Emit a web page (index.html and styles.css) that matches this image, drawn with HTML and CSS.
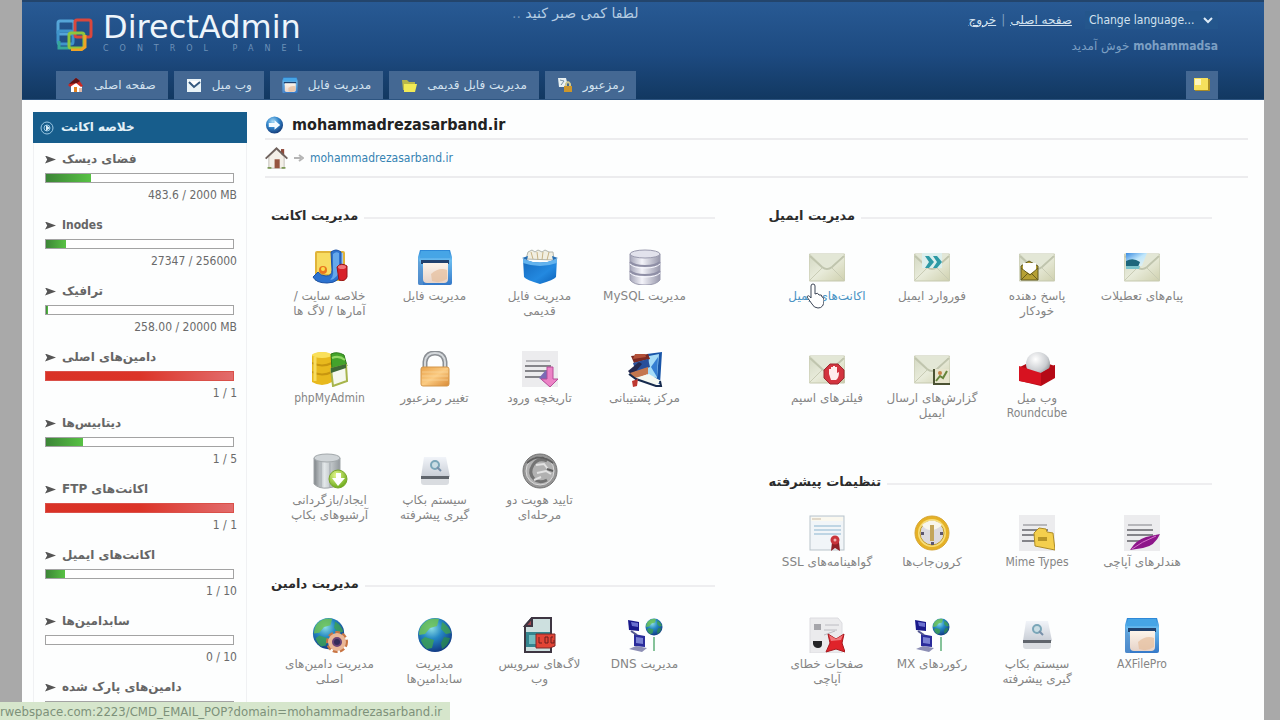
FILE: index.html
```html
<!DOCTYPE html>
<html lang="fa">
<head>
    <meta charset="UTF-8">
    <meta name="viewport" content="width=device-width, initial-scale=1.0">
    <title>DirectAdmin</title>
    <link rel="stylesheet" href="styles.css">
</head>
<body>
    <svg class="defs" aria-hidden="true">
        <defs>
            <linearGradient id="g-env" x1="0" y1="0" x2="1" y2="1"><stop offset="0" stop-color="#d3d8c3"/><stop offset=".5" stop-color="#e8ebda"/><stop offset="1" stop-color="#cfd0ae"/></linearGradient>
            <linearGradient id="g-blue" x1="0" y1="0" x2="0" y2="1"><stop offset="0" stop-color="#2b86d6"/><stop offset=".3" stop-color="#6bbdf0"/><stop offset="1" stop-color="#3478c8"/></linearGradient>
            <linearGradient id="g-box" x1="0" y1="0" x2="1" y2="1"><stop offset="0" stop-color="#1569bd"/><stop offset=".6" stop-color="#2389e0"/><stop offset="1" stop-color="#0c5fb6"/></linearGradient>
            <linearGradient id="g-cyl" x1="0" y1="0" x2="1" y2="0"><stop offset="0" stop-color="#a5a5b8"/><stop offset=".4" stop-color="#f4f4fa"/><stop offset="1" stop-color="#9797ab"/></linearGradient>
            <linearGradient id="g-steel" x1="0" y1="0" x2="1" y2="0"><stop offset="0" stop-color="#7f8488"/><stop offset=".4" stop-color="#e3e8ea"/><stop offset="1" stop-color="#92989c"/></linearGradient>
            <linearGradient id="g-lock" x1="0" y1="0" x2="1" y2="1"><stop offset="0" stop-color="#e9a24a"/><stop offset=".5" stop-color="#fbcb82"/><stop offset="1" stop-color="#d98a36"/></linearGradient>
            <linearGradient id="g-paper" x1="0" y1="0" x2="0" y2="1"><stop offset="0" stop-color="#fdf4ea"/><stop offset="1" stop-color="#e6d3c8"/></linearGradient>
            <linearGradient id="g-sky" x1="0" y1="0" x2="1" y2="1"><stop offset="0" stop-color="#3a8be0"/><stop offset=".5" stop-color="#bfe6fb"/><stop offset="1" stop-color="#e8f2ee"/></linearGradient>
            <radialGradient id="g-globe" cx=".4" cy=".3" r=".7"><stop offset="0" stop-color="#8bdde4"/><stop offset=".45" stop-color="#2588c4"/><stop offset="1" stop-color="#123c86"/></radialGradient>
            <radialGradient id="g-ball" cx=".4" cy=".3" r=".7"><stop offset="0" stop-color="#ffffff"/><stop offset=".7" stop-color="#c9ccd0"/><stop offset="1" stop-color="#8e9296"/></radialGradient>
            <radialGradient id="g-go" cx=".4" cy=".3" r=".7"><stop offset="0" stop-color="#a9dbf6"/><stop offset=".5" stop-color="#3387cc"/><stop offset="1" stop-color="#163e7c"/></radialGradient>
            <radialGradient id="g-lime" cx=".4" cy=".3" r=".7"><stop offset="0" stop-color="#e6f78e"/><stop offset="1" stop-color="#6dac1c"/></radialGradient>
            <linearGradient id="g-drive" x1="0" y1="0" x2="0" y2="1"><stop offset="0" stop-color="#f1f4f9"/><stop offset="1" stop-color="#c9ced6"/></linearGradient>
        </defs>

        <symbol id="i-stats" viewBox="0 0 36 36">
            <rect x="3" y="2" width="30" height="30" rx="2" fill="#e0b43a"/>
            <rect x="5" y="4" width="15" height="21" fill="#f7dc62"/>
            <rect x="21" y="4" width="10" height="20" fill="#9cc3ea"/>
            <circle cx="11" cy="21" r="4" fill="#e8761f"/><circle cx="11" cy="20" r="2" fill="#fbe04c"/>
            <path d="M19 3q5-4 10 0v18q0 13-14 13Q4 34 1 28l5-5q3 4 8 4 6 0 6-6z" fill="#2c72cf" stroke="#1c52a5"/>
            <path d="M21 5q3-3 6-1v16q0 9-9 11 4-4 3-9z" fill="#65a8ea"/>
            <path d="M25 18q4-5 10-1v11q-2 5-8 3z" fill="#d8202a" stroke="#98141c"/>
            <ellipse cx="30" cy="18" rx="4" ry="2" fill="#f0747a"/>
        </symbol>
        <symbol id="i-file" viewBox="0 0 36 36">
            <path d="M3 1h30l2 7v26q0 2-2 2H3q-2 0-2-2V8z" fill="url(#g-blue)"/>
            <path d="M4 2h28l1 7H3z" fill="#46a5e6"/>
            <rect x="4" y="11" width="28" height="4" fill="#20416e"/>
            <path d="M6 14h25v16q0 4-4 4H10q-4 0-4-4z" fill="url(#g-paper)"/>
            <path d="M14 25q8-7 16-4v9q-7 5-15 2z" fill="#e5bd9b" opacity=".7"/>
            <path d="M1 9v25q0 2 2 2h3V20z" fill="#5c93cc" opacity=".6"/>
        </symbol>
        <symbol id="i-box" viewBox="0 0 36 36">
            <path d="M4 10 6 3l4-2 3 2 3-2 4 2 3-2 4 2 4 0 1 8z" fill="#f1efe2" stroke="#b1b5ae"/>
            <path d="M9 3l2 7M15 3l1 8M21 3l-1 8M27 3l-2 8" stroke="#c6b284" fill="none"/>
            <path d="M1 10q17 7 34 0l-1 18q-2 3-16 7Q4 31 2 28z" fill="url(#g-box)"/>
            <path d="M1 10q17 7 34 0v4q-17 6-34 0z" fill="#63b3ee"/>
            <path d="M0 9l6-2-1 4zM36 9l-6-2 1 4z" fill="#236eb5"/>
        </symbol>
        <symbol id="i-db" viewBox="0 0 36 36">
            <path d="M3 5v26q4 5 15 5t15-5V5z" fill="url(#g-cyl)" stroke="#9a9aae"/>
            <ellipse cx="18" cy="5" rx="15" ry="4" fill="#e2e2ec" stroke="#9a9aae"/>
            <path d="M3 13q4 4 15 4t15-4M3 22q4 4 15 4t15-4" fill="none" stroke="#8f8fa6" stroke-width="2"/>
            <path d="M3 15q4 4 15 4t15-4M3 24q4 4 15 4t15-4" fill="none" stroke="#f8f8ff"/>
        </symbol>
        <symbol id="i-php" viewBox="0 0 36 36">
            <path d="M0 4q10-6 20 0v27q-10 6-20 0z" fill="#e8b91d"/>
            <ellipse cx="10" cy="4" rx="10" ry="3" fill="#fae05a"/>
            <path d="M0 12q10 5 20 0M0 21q10 5 20 0" stroke="#c8960f" stroke-width="2" fill="none"/>
            <path d="M3 6v24" stroke="#f7dc60" stroke-width="3"/>
            <path d="M19 3q6-3 13 1l3 11-15 4z" fill="#43a32b" stroke="#2b7a1a"/>
            <path d="M20 7q7-3 13 2" stroke="#93d866" stroke-width="2" fill="none"/>
            <path d="M19 18l15-4 1 16-14 5z" fill="#f5f8ee" stroke="#a7b54c" stroke-width="2"/>
            <path d="M19 17l15-4v4l-15 5z" fill="#3d6a36"/>
        </symbol>
        <symbol id="i-lock" viewBox="0 0 36 36">
            <path d="M8 18V11Q9 2 18 2t10 9v7" fill="none" stroke="#8b8f94" stroke-width="5"/>
            <path d="M8 18V11Q9 2 18 2t10 9v7" fill="none" stroke="#d5d9dc" stroke-width="2"/>
            <rect x="4" y="16" width="28" height="19" rx="2" fill="url(#g-lock)" stroke="#d3964a"/>
            <path d="M5 21h26M5 25h26M5 29h26" stroke="#fbdba5" opacity=".6"/>
        </symbol>
        <symbol id="i-page" viewBox="0 0 36 36">
            <rect x="0" y="0" width="36" height="36" fill="#ececee"/>
            <path d="M4 10h24" stroke="#b6b6ba" stroke-width="2"/>
            <path d="M3 15h26M3 20h26M3 26h20" stroke="#85858a" stroke-width="2"/>
        </symbol>
        <symbol id="i-history" viewBox="0 0 36 36">
            <use href="#i-page"/>
            <path d="M17 27l7-8 3 5-2 9z" fill="#7b6ab5"/>
            <path d="M25 16h6v12h5l-8 8-9-8h6z" fill="#ec83c6" stroke="#b74d99"/>
        </symbol>
        <symbol id="i-help" viewBox="0 0 36 36">
            <path d="M20 3 35 1l-2 32-13-4z" fill="#1855a8"/>
            <path d="M22 5l10-2-2 24-10-2z" fill="#a6dcf7"/><path d="M24 16l7-10-1 20z" fill="#357ed2"/>
            <path d="M4 5l17-2 2 5-16 4z" fill="#7c2922"/><path d="M8 3l10 0 1 3-13 2z" fill="#b35038"/>
            <path d="M6 12l15-4 2 8-14 5z" fill="#284f9b"/>
            <path d="M1 20 12 11l3 2-10 12z" fill="#24284e"/>
            <path d="M3 22l18-6v7L8 28z" fill="#c4774e"/>
            <path d="M8 27l14-4 12 7-6 5z" fill="#f5f8f0"/>
            <path d="M2 23l7 5 20 7h5l-1-5" fill="none" stroke="#162a4d" stroke-width="2"/>
            <path d="M5 30l6-2-1 7-4 1z" fill="#be3831"/>
        </symbol>
        <symbol id="i-restore" viewBox="0 0 36 36">
            <path d="M2 5v26q5 5 14 4t12-4V5z" fill="url(#g-steel)" stroke="#a0a5a8"/>
            <ellipse cx="15" cy="5" rx="13" ry="4" fill="#d0d5d8" stroke="#a2a8ab"/>
            <path d="M9 9v25M18 9v25" stroke="#b3b9bd" stroke-width="2"/>
            <circle cx="26" cy="26" r="9" fill="url(#g-lime)" stroke="#79a62b"/>
            <path d="M24 20h5v5h4l-7 8-6-8h4z" fill="#fff"/>
        </symbol>
        <symbol id="i-drive" viewBox="0 0 36 36">
            <path d="M7 4h22l4 20H4z" fill="url(#g-drive)"/>
            <path d="M4 23h28v6q0 3-3 3H7q-3 0-3-3z" fill="#d9dce0"/>
            <path d="M4 23h28v3H4z" fill="#60656c"/>
            <circle cx="18" cy="12" r="4" fill="#c9dde4" stroke="#7aa6b8" stroke-width="2"/>
            <path d="M20 14l4 4" stroke="#7890aa" stroke-width="2"/>
        </symbol>
        <symbol id="i-coin" viewBox="0 0 36 36">
            <circle cx="18" cy="18" r="17" fill="#969696" stroke="#727272"/>
            <circle cx="18" cy="18" r="14" fill="#b1b1b1" stroke="#dadada"/>
            <path d="M25 8Q16 4 11 12t1 14q5 5 13 1" fill="none" stroke="#737373" stroke-width="3"/>
            <path d="M15 20l9-2 5 3M14 12l8-1 4 5M12 27l7-3" stroke="#e2e2e2" stroke-width="2" fill="none"/>
            <path d="M5 10q12-11 26 0M25 16l6 2" stroke="#606060" fill="none" stroke-width="2"/>
        </symbol>

        <symbol id="i-mail" viewBox="0 0 36 36">
            <rect x="0" y="5" width="36" height="27" rx="1" fill="url(#g-env)" stroke="#c5c8ae"/>
            <path d="M1 31l13-13M35 31L22 18" stroke="#c9ccb5"/>
            <path d="M1 7l12 11q5 4 10 0L35 7" fill="none" stroke="#c0c5ae" stroke-width="2"/>
            <path d="M1 5l12 11q5 4 10 0L35 5" fill="#e3e7d6"/>
        </symbol>
        <symbol id="i-forward" viewBox="0 0 36 36">
            <use href="#i-mail"/>
            <path d="M8 4h20v15H8z" fill="#dcefed"/>
            <path d="M11 7h4l5 6-5 6h-4l4-6zM19 7h4l5 6-5 6h-4l4-6z" fill="#2d9aa5"/>
        </symbol>
        <symbol id="i-auto" viewBox="0 0 36 36">
            <use href="#i-mail"/>
            <path d="M2 17l8-5 9 5v14H2z" fill="#b6a033" stroke="#61581f"/>
            <path d="M4 14h13v7l-6 4-7-4z" fill="#fff"/>
            <path d="M2 19l9 7 8-7M2 31l7-7M19 31l-7-7" fill="none" stroke="#675d1f"/>
        </symbol>
        <symbol id="i-vacation" viewBox="0 0 36 36">
            <use href="#i-mail"/>
            <path d="M2 4h21l-5 13H2z" fill="url(#g-sky)"/>
            <path d="M2 12q7-4 14 1l-2 5-12 1z" fill="#1c667c"/><path d="M2 17h14l-1 3H2z" fill="#7bc3cb"/>
        </symbol>
        <symbol id="i-spam" viewBox="0 0 36 36">
            <use href="#i-mail"/>
            <path d="M21 13h8l6 6v8l-6 6h-8l-6-6v-8z" fill="#d3343f" stroke="#9c2931"/>
            <path d="M20 23v-5h2v-2h2v-1h2v1h2v6l2-1q0 6-3 8h-5z" fill="#ffecec"/>
        </symbol>
        <symbol id="i-report" viewBox="0 0 36 36">
            <use href="#i-mail"/>
            <path d="M20 18h15v15H20z" fill="#e7e5ce"/>
            <path d="M20 18v15h16" fill="none" stroke="#4a5233" stroke-width="2"/>
            <path d="M22 30l4-5 3 2 4-7" fill="none" stroke="#66843b" stroke-width="2"/><circle cx="26" cy="22" r="2" fill="#c58347"/>
        </symbol>
        <symbol id="i-roundcube" viewBox="0 0 36 36">
            <path d="M1 16l6-3h23l6 2v12L22 35 1 30z" fill="#b30d16"/>
            <circle cx="19" cy="13" r="12" fill="url(#g-ball)"/>
            <path d="M0 15l22 7 14-8v12l-14 8L0 30z" fill="#d71220"/>
            <path d="M22 22l14-8v12l-14 8z" fill="#b50a16"/>
        </symbol>
        <symbol id="i-ssl" viewBox="0 0 36 36">
            <rect x="1" y="1" width="34" height="34" fill="#f1f5f8" stroke="#b9c3ca"/>
            <path d="M2 2h32v4H2z" fill="#faf8ef"/><path d="M3 4h9" stroke="#c9baa5"/>
            <path d="M5 11h27M5 15h27M5 19h27" stroke="#bed5e4" stroke-width="2"/>
            <path d="M23 27l-1 9 4-3 5 3-1-9z" fill="#8f2025"/>
            <circle cx="26" cy="25" r="3" fill="#f0b0b0" stroke="#c9343a" stroke-width="3"/>
        </symbol>
        <symbol id="i-clock" viewBox="0 0 36 36">
            <circle cx="18" cy="18" r="17" fill="#e5b125" stroke="#d6a534"/>
            <circle cx="18" cy="18" r="14" fill="#f7dc76"/>
            <circle cx="18" cy="18" r="12" fill="#dcdadf" stroke="#c39d2d"/>
            <path d="M8 10q10-9 20 0-5 5-11 5t-9-5" fill="#f7f5ec"/>
            <path d="M16 10h4v16h-4z" fill="#c3a55a"/>
            <path d="M7 17h3v3H7zM26 17h3v3h-3zM17 27h3v3h-3z" fill="#5b5670"/>
        </symbol>
        <symbol id="i-mime" viewBox="0 0 36 36">
            <use href="#i-page"/>
            <path d="M15 18l5-5 7 1 1 3 6 1 2 17-20-4z" fill="#f4cf4d" stroke="#ae8c27"/>
            <path d="M19 22h9v4h-9z" fill="#b79527"/>
        </symbol>
        <symbol id="i-handler" viewBox="0 0 36 36">
            <use href="#i-page"/>
            <path d="M6 35q6-10 16-13l14-3q-5 12-17 14z" fill="#8d168a"/>
            <path d="M8 34q9-7 24-13" stroke="#d673cc" fill="none"/>
        </symbol>
        <symbol id="i-error" viewBox="0 0 36 36">
            <path d="M1 1h28l4 5v30H1z" fill="#ebebed" stroke="#dcdce0"/>
            <path d="M5 7h7v6H5z" fill="#a5a5aa"/><path d="M16 8h14M15 13h13M15 18l11-4" stroke="#bcbcc2"/>
            <path d="M4 24h9v3q0 4-4 4t-5-4z" fill="#242426"/>
            <path d="M19 17l8 5 8-5-2 9 3 9-9-3-10 3 4-9z" fill="#e0232a" stroke="#a7191f"/>
            <path d="M20 18l7 4 7-4-2 5-10 1z" fill="#f1777a"/>
        </symbol>
        <symbol id="i-globe" viewBox="0 0 36 36">
            <circle cx="18" cy="18" r="17" fill="url(#g-globe)"/>
            <path d="M5 8q7-8 17-6l-2 7-7 2-5 6-6 1q0-6 3-10z" fill="#6fc34d" opacity=".8"/>
            <path d="M25 5q7 4 9 11l-5 1-5-5zM8 20l9 3-2 8-5 1q-5-4-6-9z" fill="#3fa351" opacity=".8"/>
            <path d="M27 20l6 1q-2 8-8 11l-1-6z" fill="#2b8a50" opacity=".8"/>
        </symbol>
        <symbol id="i-domain" viewBox="0 0 36 36">
            <g transform="scale(.92)"><use href="#i-globe" width="36" height="36"/></g>
            <circle cx="25" cy="25" r="8" fill="none" stroke="#c87544" stroke-width="6" stroke-dasharray="4 2"/>
            <circle cx="25" cy="25" r="7" fill="#6b4376" stroke="#eab797" stroke-width="4"/>
            <circle cx="25" cy="25" r="3" fill="#342b5b"/>
        </symbol>
        <symbol id="i-log" viewBox="0 0 36 36">
            <path d="M10 1h19v34H3V9z" fill="#cde0df" stroke="#3e3642" stroke-width="2"/>
            <path d="M10 1v8H3z" fill="#a04850" stroke="#3e3642" stroke-width="2"/>
            <path d="M4 15h24v15H4z" fill="#35858f"/><path d="M7 18h7v9H7z" fill="#73bdc0"/>
            <path d="M14 17h19v12l-5 2H14z" fill="#e24436" stroke="#7c2929"/>
            <path d="M17 20v6h3M23 20h3v6h-3zM31 20h-2v6h3v-3" fill="none" stroke="#6b1f1f"/>
        </symbol>
        <symbol id="i-dns" viewBox="0 0 36 36">
            <path d="M1 3l11 2v9L2 13z" fill="#1a1a8b"/><path d="M4 5l7 1v4l-6-1z" fill="#6a70cf"/>
            <path d="M7 17l11 2v11L7 29z" fill="#2a2c9b"/><path d="M9 20l7 1v6l-7-1z" fill="#7a82d3"/>
            <path d="M2 32l7-3 11 2-5 4z" fill="#8d8fb5"/><path d="M4 14l6 4" stroke="#52568f" stroke-width="2"/>
            <g transform="translate(18 1) scale(.5)"><use href="#i-globe" width="36" height="36"/></g>
            <path d="M27 20v14" stroke="#86c39a" stroke-width="2"/>
        </symbol>

        <symbol id="i-home" viewBox="0 0 36 36">
            <path d="M25 4h5v11h-5z" fill="#8f4a3a"/>
            <path d="M6 16L18 5l12 11v18H6z" fill="#f3efe8" stroke="#a8a29b"/>
            <path d="M1 19L18 3l17 16" fill="none" stroke="#6f625d" stroke-width="3"/>
            <path d="M15 20h8v14h-8z" fill="#96533e"/><path d="M4 32h6v3H4zM26 32h6v3h-6z" fill="#7d9a58"/>
        </symbol>
        <symbol id="i-homered" viewBox="0 0 16 16">
            <path d="M3 8l5-5 6 5v7H3z" fill="#fff"/><path d="M0 8l8-7 3 2 4 6-2 1-5-4-6 4z" fill="#c92822"/>
            <path d="M1 7l7-6 4 3-3 2z" fill="#5f1213"/><path d="M6 10h3v5H6z" fill="#e58220"/><path d="M11 11h3v4h-3z" fill="#e0b9a8"/>
        </symbol>
        <symbol id="i-webmail" viewBox="0 0 16 16">
            <path d="M1 2h14v13H1z" fill="#e9f3f7"/><path d="M2 4h12l-6 6z" fill="#fff"/><path d="M3 5l5 5 6-5" fill="none" stroke="#34597f" stroke-width="2"/>
        </symbol>
        <symbol id="i-folder" viewBox="0 0 16 16">
            <path d="M1 3h5l2 2h6v8H2z" fill="#b9b74a"/><path d="M3 7h13l-2 8H3z" fill="#f1ea56"/>
        </symbol>
        <symbol id="i-key" viewBox="0 0 16 16">
            <path d="M1 1h8l1 4-3 5H2z" fill="#e8f0f1"/><path d="M3 3l4 1-3 4" fill="none" stroke="#7690a4"/>
            <path d="M9 9V7q2-4 4 0v2" fill="none" stroke="#cdc78f" stroke-width="2"/><path d="M7 9h8v6H7z" fill="#cc962b"/>
        </symbol>
        <symbol id="i-go" viewBox="0 0 20 20">
            <circle cx="10" cy="10" r="9" fill="url(#g-go)"/><path d="M4 8h6V5l6 5-6 5v-3H4z" fill="#f3fbff"/>
        </symbol>
    </svg>

    <div class="page">
        <header class="header">
            <div class="header-top">
                <a class="brand" href="#">
                    <svg class="brand-mark" viewBox="0 0 38 34" fill="none" stroke-width="3">
                        <rect x="2" y="4" width="16" height="13" rx="2" stroke="#55a5d8"/>
                        <rect x="2" y="14" width="15" height="13" rx="2" stroke="#3f94cb"/>
                        <path d="M3 24v7h11" stroke="#35a79a"/>
                        <rect x="19" y="3" width="16" height="17" rx="2" stroke="#d9473c"/>
                        <rect x="13" y="16" width="15" height="15" rx="2" stroke="#8cc63e"/>
                        <path d="M29 18v12l-4 3H15" stroke="#f0a325"/>
                    </svg>
                    <span class="brand-text">
                        <span class="brand-name">DirectAdmin</span>
                        <span class="brand-sub">CONTROL PANEL</span>
                    </span>
                </a>
                <p class="notice" dir="rtl">لطفا کمی صبر کنید <span>..</span></p>
                <div class="user">
                    <div class="user-links">
                        <a href="#">خروج</a>
                        <span>|</span>
                        <a href="#">صفحه اصلی</a>
                        <span class="lang">
                            <select aria-label="Change language">
                                <option>Change language...</option>
                            </select>
                            <svg viewBox="0 0 10 8"><path d="M1 2l4 4 4-4" fill="none" stroke="#dcebf7" stroke-width="2"/></svg>
                        </span>
                    </div>
                    <p class="welcome" dir="rtl"><b class="latin">mohammadsa</b> خوش آمدید</p>
                </div>
            </div>
            <nav class="tabs">
                <a href="#"><svg><use href="#i-homered"/></svg>صفحه اصلی</a>
                <a href="#"><svg><use href="#i-webmail"/></svg>وب میل</a>
                <a href="#"><svg><use href="#i-file"/></svg>مدیریت فایل</a>
                <a href="#"><svg><use href="#i-folder"/></svg>مدیریت فایل قدیمی</a>
                <a href="#"><svg><use href="#i-key"/></svg>رمزعبور</a>
                <a class="tab-note" href="#" aria-label="note"><svg viewBox="0 0 16 16"><path d="M1 2h15v12H1z" fill="#a98b25"/><path d="M0 1h14v12H0z" fill="#f6e05c"/><path d="M1 2h6v6H1z" fill="#fdf6bd"/></svg></a>
            </nav>
        </header>

        <div class="content">
            <aside class="sidebar">
                <h2 class="sidebar-title">
                    <svg viewBox="0 0 14 14"><circle cx="7" cy="7" r="6" fill="none" stroke="#9cc8e4"/><circle cx="7" cy="7" r="3" fill="none" stroke="#9cc8e4"/><path d="M6 4l4 3-4 3z" fill="#d8edf8"/></svg>
                    خلاصه اکانت
                </h2>
                <div class="stat">
                    <h3><span dir="rtl">فضای دیسک</span></h3>
                    <div class="bar"><div class="fill" style="width: 24.2%"></div></div>
                    <p>483.6 / 2000 MB</p>
                </div>
                <div class="stat">
                    <h3 class="latin">Inodes</h3>
                    <div class="bar"><div class="fill" style="width: 10.7%"></div></div>
                    <p>27347 / 256000</p>
                </div>
                <div class="stat">
                    <h3><span dir="rtl">ترافیک</span></h3>
                    <div class="bar"><div class="fill" style="width: 1.3%"></div></div>
                    <p>258.00 / 20000 MB</p>
                </div>
                <div class="stat">
                    <h3><span dir="rtl">دامین‌های اصلی</span></h3>
                    <div class="bar full"><div class="fill" style="width: 100%"></div></div>
                    <p>1 / 1</p>
                </div>
                <div class="stat">
                    <h3><span dir="rtl">دیتابیس‌ها</span></h3>
                    <div class="bar"><div class="fill" style="width: 20%"></div></div>
                    <p>1 / 5</p>
                </div>
                <div class="stat">
                    <h3><span dir="rtl">اکانت‌های FTP</span></h3>
                    <div class="bar full"><div class="fill" style="width: 100%"></div></div>
                    <p>1 / 1</p>
                </div>
                <div class="stat">
                    <h3><span dir="rtl">اکانت‌های ایمیل</span></h3>
                    <div class="bar"><div class="fill" style="width: 10%"></div></div>
                    <p>1 / 10</p>
                </div>
                <div class="stat">
                    <h3><span dir="rtl">سابدامین‌ها</span></h3>
                    <div class="bar"><div class="fill" style="width: 0%"></div></div>
                    <p>0 / 10</p>
                </div>
                <div class="stat">
                    <h3><span dir="rtl">دامین‌های پارک شده</span></h3>
                    <div class="bar"><div class="fill" style="width: 0%"></div></div>
                </div>
            </aside>

            <main class="main">
                <h1 class="domain"><svg><use href="#i-go"/></svg>mohammadrezasarband.ir</h1>
                <nav class="crumbs">
                    <svg class="crumb-home"><use href="#i-home"/></svg>
                    <svg class="crumb-arrow" viewBox="0 0 10 8"><path d="M0 4h7M5 1l4 3-4 3" fill="none" stroke="#b5b5b5" stroke-width="2"/></svg>
                    <a href="#">mohammadrezasarband.ir</a>
                </nav>

                <div class="columns">
                    <div class="column">
                        <section>
                            <h2 class="section-title">مدیریت اکانت</h2>
                            <div class="items">
                                <a href="#"><svg><use href="#i-stats"/></svg>خلاصه سایت /<br>آمارها / لاگ ها</a>
                                <a href="#"><svg><use href="#i-file"/></svg>مدیریت فایل</a>
                                <a href="#"><svg><use href="#i-box"/></svg>مدیریت فایل<br>قدیمی</a>
                                <a href="#"><svg><use href="#i-db"/></svg>مدیریت MySQL</a>
                                <a class="latin" href="#"><svg><use href="#i-php"/></svg>phpMyAdmin</a>
                                <a href="#"><svg><use href="#i-lock"/></svg>تغییر رمزعبور</a>
                                <a href="#"><svg><use href="#i-history"/></svg>تاریخچه ورود</a>
                                <a href="#"><svg><use href="#i-help"/></svg>مرکز پشتیبانی</a>
                                <a href="#"><svg><use href="#i-restore"/></svg>ایجاد/بازگردانی<br>آرشیوهای بکاپ</a>
                                <a href="#"><svg><use href="#i-drive"/></svg>سیستم بکاپ<br>گیری پیشرفته</a>
                                <a href="#"><svg><use href="#i-coin"/></svg>تایید هویت دو<br>مرحله‌ای</a>
                            </div>
                        </section>
                        <section>
                            <h2 class="section-title">مدیریت دامین</h2>
                            <div class="items">
                                <a href="#"><svg><use href="#i-domain"/></svg>مدیریت دامین‌های<br>اصلی</a>
                                <a href="#"><svg><use href="#i-globe"/></svg>مدیریت<br>سابدامین‌ها</a>
                                <a href="#"><svg><use href="#i-log"/></svg>لاگ‌های سرویس<br>وب</a>
                                <a href="#"><svg><use href="#i-dns"/></svg>مدیریت DNS</a>
                            </div>
                        </section>
                    </div>
                    <div class="column">
                        <section>
                            <h2 class="section-title">مدیریت ایمیل</h2>
                            <div class="items">
                                <a class="hovered" href="#"><svg><use href="#i-mail"/></svg>اکانت‌های ایمیل
                                    <svg class="cursor" viewBox="0 0 18 26"><path d="M5 15V3q0-2 2-2t2 2v8q3-2 4 1 3-1 3 2 2 0 2 3 0 8-6 8-4 0-6-4l-5-7q1-3 4 1z" fill="#fff" stroke="#3d4656" stroke-width="1"/></svg>
                                </a>
                                <a href="#"><svg><use href="#i-forward"/></svg>فوروارد ایمیل</a>
                                <a href="#"><svg><use href="#i-auto"/></svg>پاسخ دهنده<br>خودکار</a>
                                <a href="#"><svg><use href="#i-vacation"/></svg>پیام‌های تعطیلات</a>
                                <a href="#"><svg><use href="#i-spam"/></svg>فیلترهای اسپم</a>
                                <a href="#"><svg><use href="#i-report"/></svg>گزارش‌های ارسال<br>ایمیل</a>
                                <a href="#"><svg><use href="#i-roundcube"/></svg>وب میل<br><span class="latin">Roundcube</span></a>
                            </div>
                        </section>
                        <section>
                            <h2 class="section-title">تنظیمات پیشرفته</h2>
                            <div class="items">
                                <a href="#"><svg><use href="#i-ssl"/></svg>گواهینامه‌های SSL</a>
                                <a href="#"><svg><use href="#i-clock"/></svg>کرون‌جاب‌ها</a>
                                <a class="latin" href="#"><svg><use href="#i-mime"/></svg>Mime Types</a>
                                <a href="#"><svg><use href="#i-handler"/></svg>هندلرهای آپاچی</a>
                                <a href="#"><svg><use href="#i-error"/></svg>صفحات خطای<br>آپاچی</a>
                                <a href="#"><svg><use href="#i-dns"/></svg>رکوردهای MX</a>
                                <a href="#"><svg><use href="#i-drive"/></svg>سیستم بکاپ<br>گیری پیشرفته</a>
                                <a class="latin" href="#"><svg><use href="#i-file"/></svg>AXFilePro</a>
                            </div>
                        </section>
                    </div>
                </div>
            </main>
        </div>
    </div>

    <div class="status">rwebspace.com:2223/CMD_EMAIL_POP?domain=mohammadrezasarband.ir</div>
</body>
</html>
```

FILE: styles.css
```css
* {
    box-sizing: border-box;
}
body {
    margin: 0;
    height: 100vh;
    overflow: hidden;
    background: #a9a9a9;
    color: #6a6a6a;
    font-family: 'DejaVu Sans', sans-serif;
    font-size: 12px;
    line-height: 15px;
}
h1, h2, h3, p {
    margin: 0;
}
a {
    color: inherit;
    text-decoration: none;
}
.latin, .lang select, .stat p, .main h1, .crumbs, .status {
    font-family: 'DejaVu Sans Condensed', 'DejaVu Sans', sans-serif;
}
.defs {
    position: absolute;
    width: 0;
    height: 0;
}
.page {
    min-height: 100vh;
    margin: 0 16px 0 22px;
    background: #fdfefe;
}

/* header */
.header {
    display: flex;
    flex-direction: column;
    justify-content: space-between;
    height: 100px;
    padding: 0 46px 0 34px;
    border-top: 2px solid #23456c;
    border-bottom: 1px solid #2d5480;
    background: linear-gradient(#285a94, #1d4a80 55%, #123861);
    color: #d3e2ef;
}
.header-top {
    display: grid;
    grid-template-columns: 456px 1fr auto;
}
.brand {
    display: flex;
    gap: 9px;
}
.brand-mark {
    width: 38px;
    height: 34px;
    margin-top: 15px;
}
.brand-text {
    display: flex;
    flex-direction: column;
    padding-top: 7px;
}
.brand-name {
    color: #eef5fb;
    font-size: 32px;
    line-height: 36px;
}
.brand-sub {
    color: #6d91b8;
    font-size: 8px;
    line-height: 8px;
    letter-spacing: 11px;
}
.notice {
    justify-self: start;
    padding-top: 3px;
    color: #b4cce2;
    font-size: 14px;
    line-height: 16px;
}
.notice span {
    color: #6f93b8;
}
.user {
    padding-top: 9px;
}
.user-links {
    display: flex;
    align-items: center;
    gap: 5px;
}
.user-links a {
    text-decoration: underline;
}
.user-links span {
    color: #7f9fbe;
}
.lang {
    display: flex;
    align-items: center;
    width: 133px;
    margin-left: 8px;
    padding-right: 5px;
    background: #24568c;
}
.lang select {
    flex: 1;
    min-width: 0;
    padding: 0 0 0 4px;
    border: 0;
    appearance: none;
    background: transparent;
    color: #d3e2ef;
    font-size: 12px;
    line-height: 18px;
}
.lang svg {
    width: 10px;
    height: 8px;
}
.welcome {
    padding-top: 10px;
    color: #7c9fc3;
}
.tabs {
    display: flex;
    gap: 6px;
}
.tabs a {
    display: flex;
    align-items: center;
    gap: 10px;
    height: 28px;
    padding: 0 12px;
    background: #446893;
}
.tabs svg {
    width: 16px;
    height: 16px;
}
.tabs .tab-note {
    margin-left: auto;
    padding: 0 8px;
}

/* sidebar */
.content {
    display: flex;
    gap: 18px;
    padding: 12px 16px 0 11px;
}
.sidebar {
    flex: 0 0 214px;
    border: 1px solid #f0f1f3;
    border-top: 0;
}
.sidebar-title {
    display: flex;
    align-items: center;
    gap: 7px;
    height: 31px;
    margin: 0 -1px;
    padding: 0 7px;
    background: #175d8c;
    color: #e3f1f8;
    font-size: 12px;
}
.sidebar-title svg {
    width: 14px;
    height: 14px;
}
.stat {
    height: 66px;
    padding: 9px 9px 0 11px;
}
.stat h3 {
    display: flex;
    align-items: center;
    gap: 6px;
    font-size: 12px;
    color: #666;
}
.stat h3::before {
    content: "";
    width: 11px;
    height: 8px;
    background: #555;
    clip-path: polygon(0 0, 100% 50%, 0 100%, 20% 50%);
}
.bar {
    height: 10px;
    margin: 6px 3px 5px 0;
    border: 1px solid #a3a3a3;
    background: #fff;
}
.fill {
    height: 100%;
    background: linear-gradient(to right, #3c8537, #58c244);
}
.full {
    border-color: #da5049;
}
.full .fill {
    background: linear-gradient(to right, #d93226, #dc3428 50%, #e26c6c);
}
.stat p {
    text-align: right;
}

/* main */
.main {
    flex: 1;
    min-width: 0;
}
.domain {
    display: flex;
    align-items: center;
    gap: 8px;
    height: 28px;
    border-bottom: 2px solid #ececee;
    color: #222;
    font-size: 16px;
    line-height: 20px;
}
.domain svg {
    width: 19px;
    height: 20px;
}
.crumbs {
    display: flex;
    align-items: center;
    gap: 6px;
    height: 38px;
    border-bottom: 2px solid #ececee;
    color: #3583b3;
}
.crumb-home {
    width: 23px;
    height: 26px;
}
.crumb-arrow {
    width: 10px;
    height: 8px;
}
.columns {
    display: grid;
    grid-template-columns: 1fr 1fr;
    gap: 12px;
    padding-top: 29px;
}
.column {
    display: flex;
    flex-direction: column;
    gap: 56px;
    padding: 0 36px 0 6px;
}
.section-title {
    display: flex;
    align-items: center;
    gap: 6px;
    height: 16px;
    color: #2c2c2c;
    font-size: 13px;
}
.section-title::after {
    content: "";
    flex: 1;
    height: 2px;
    margin-top: 6px;
    background: #eeeef0;
}
.items {
    display: grid;
    grid-template-columns: repeat(auto-fill, 105px);
    grid-auto-rows: 66px;
    row-gap: 36px;
    margin: 26px 0 0 6px;
}
.items a {
    position: relative;
    color: #858585;
    direction: rtl;
    text-align: center;
}
.items svg {
    display: block;
    width: 36px;
    height: 36px;
    margin: 0 auto 4px;
}
.items .hovered {
    color: #4a93c4;
}
.items .cursor {
    position: absolute;
    top: 34px;
    left: 31px;
    width: 18px;
    height: 26px;
    margin: 0;
}

/* link target shown over the page */
.status {
    position: fixed;
    left: 0;
    bottom: 0;
    height: 18px;
    padding: 2px 8px 0 0;
    background: #d6e6cc;
    color: #7d917a;
    font-size: 13px;
}
```
